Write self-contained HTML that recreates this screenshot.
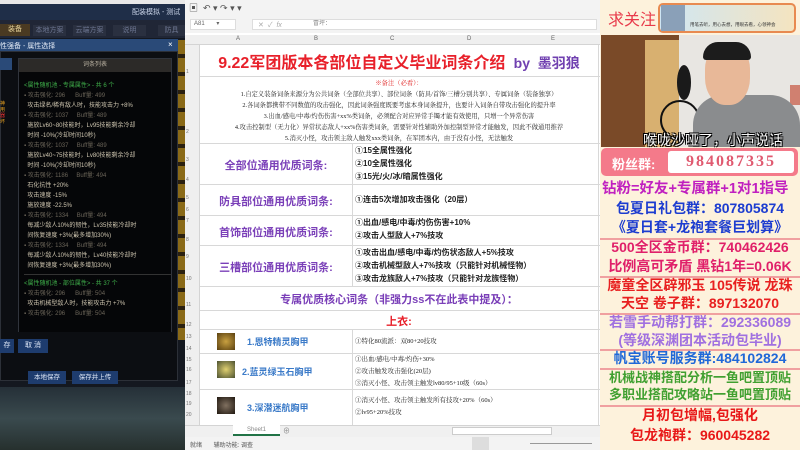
<!DOCTYPE html>
<html><head><meta charset="utf-8"><style>
*{margin:0;padding:0;box-sizing:border-box}
body{width:800px;height:450px;overflow:hidden;position:relative;background:#fff;font-family:"Liberation Sans","Noto Sans CJK SC",sans-serif}
.a{position:absolute}
.c{text-align:center;white-space:nowrap}
.n{white-space:nowrap}
</style></head><body>

<!-- LEFT GAME PANEL -->
<div class="a" style="left:0;top:0;width:185px;height:450px;background:#141820"></div>
<div class="a" style="left:0;top:0;width:185px;height:4px;background:#e8e8e8"></div>
<div class="a" style="left:0;top:4px;width:185px;height:16px;background:#1f2e48"></div>
<div class="a n" style="left:132px;top:7px;font-size:7px;color:#c9d4e8">配装模拟 - 测试</div>
<div class="a" style="left:0;top:20px;width:185px;height:18px;background:#202636"></div>
<div class="a c" style="left:0;top:24px;width:30px;height:12px;background:#4a3a22;color:#e8d49a;font-size:7px;line-height:12px">装备</div>
<div class="a c" style="left:33px;top:25px;width:33px;height:11px;background:#2a3040;color:#6c7590;font-size:7px;line-height:11px">本地方案</div>
<div class="a c" style="left:73px;top:25px;width:33px;height:11px;background:#2a3040;color:#6c7590;font-size:7px;line-height:11px">云端方案</div>
<div class="a c" style="left:113px;top:25px;width:33px;height:11px;background:#2a3040;color:#6c7590;font-size:7px;line-height:11px">说明</div>
<div class="a c" style="left:158px;top:25px;width:27px;height:11px;background:#2a3040;color:#6c7590;font-size:7px;line-height:11px">防具</div>
<div class="a" style="left:0;top:39px;width:178px;height:12px;background:#2a4a78"></div>
<div class="a n" style="left:0;top:41px;font-size:7px;color:#e0e8f4">性强备 - 属性选择</div>
<div class="a n" style="left:168px;top:40px;font-size:8px;color:#fff">×</div>
<div class="a" style="left:0;top:51px;width:178px;height:330px;background:#0c0e12;border:1px solid #2c3038"></div>
<div class="a" style="left:0;top:58px;width:12px;height:12px;background:#2a4a78"></div>
<div class="a" style="left:18px;top:58px;width:154px;height:276px;background:#050608;border:1px solid #30343c"></div>
<div class="a c" style="left:19px;top:59px;width:152px;height:13px;background:#2c2a28;color:#b8b0a0;font-size:6px;line-height:13px">词条列表</div>
<div class="a" style="left:0;top:101px;width:12px;height:40px;font-size:5px;color:#e6a020;line-height:6px">神<br>用<br><span style="color:#e03030">器</span><br>坏</div>
<div class="a" style="left:24px;top:81px;width:148px;font-size:6px;line-height:10px;color:#cfc6b0">
<div style="color:#3fae4a">&lt;属性随机池 - 专属属性&gt; - 共 6 个</div>
<div style="color:#6a6458">▪ 攻击强化: 296 &nbsp;&nbsp;&nbsp;&nbsp; Buff量: 499</div>
<div>&nbsp;&nbsp;攻击绿名/稀有敌人时，技能攻击力 +8%</div>
<div style="color:#6a6458">▪ 攻击强化: 1037 &nbsp;&nbsp;&nbsp; Buff量: 489</div>
<div>&nbsp;&nbsp;施放Lv60~80技能时，Lv95技能剩余冷却</div>
<div>&nbsp;&nbsp;时间 -10%(冷却时间10秒)</div>
<div style="color:#6a6458">▪ 攻击强化: 1037 &nbsp;&nbsp;&nbsp; Buff量: 489</div>
<div>&nbsp;&nbsp;施放Lv40~75技能时，Lv80技能剩余冷却</div>
<div>&nbsp;&nbsp;时间 -10%(冷却时间10秒)</div>
<div style="color:#6a6458">▪ 攻击强化: 1186 &nbsp;&nbsp;&nbsp; Buff量: 494</div>
<div>&nbsp;&nbsp;石化抗性 +20%</div>
<div>&nbsp;&nbsp;攻击速度 -15%</div>
<div>&nbsp;&nbsp;施放速度 -22.5%</div>
<div style="color:#6a6458">▪ 攻击强化: 1334 &nbsp;&nbsp;&nbsp; Buff量: 494</div>
<div>&nbsp;&nbsp;每减少敌人10%的韧性，Lv35技能冷却时</div>
<div>&nbsp;&nbsp;间恢复速度 +3%(最多增加30%)</div>
<div style="color:#6a6458">▪ 攻击强化: 1334 &nbsp;&nbsp;&nbsp; Buff量: 494</div>
<div>&nbsp;&nbsp;每减少敌人10%的韧性，Lv40技能冷却时</div>
<div>&nbsp;&nbsp;间恢复速度 +3%(最多增加30%)</div>
<div style="height:4px;border-bottom:1px solid #333;margin-bottom:4px"></div>
<div style="color:#3fae4a">&lt;属性随机池 - 部位属性&gt; - 共 37 个</div>
<div style="color:#6a6458">▪ 攻击强化: 296 &nbsp;&nbsp;&nbsp;&nbsp; Buff量: 504</div>
<div>&nbsp;&nbsp;攻击机械型敌人时，技能攻击力 +7%</div>
<div style="color:#6a6458">▪ 攻击强化: 296 &nbsp;&nbsp;&nbsp;&nbsp; Buff量: 504</div>
</div>
<div class="a" style="left:18px;top:332px;width:154px;height:3px;background:#0c0e12"></div>
<div class="a c" style="left:0;top:339px;width:14px;height:14px;background:#1e3c6e;color:#dfe8f8;font-size:7px;line-height:14px">存</div>
<div class="a c" style="left:18px;top:339px;width:30px;height:14px;background:#1e3c6e;color:#dfe8f8;font-size:7px;line-height:14px">取 消</div>
<div class="a c" style="left:28px;top:371px;width:38px;height:13px;background:#1e3c6e;color:#dfe8f8;font-size:6.5px;line-height:13px">本地保存</div>
<div class="a c" style="left:72px;top:371px;width:46px;height:13px;background:#1e3c6e;color:#dfe8f8;font-size:6.5px;line-height:13px">保存并上传</div>
<div class="a" style="left:0;top:387px;width:185px;height:63px;background:linear-gradient(#253038,#3a4a4e 50%,#26302e)"></div>
<div class="a" style="left:178px;top:40px;width:7px;height:300px;background:repeating-linear-gradient(#8a6a18 0 14px,#2a2010 14px 18px)"></div>

<!-- SPREADSHEET -->
<div class="a" style="left:185px;top:0;width:415px;height:450px;background:#fff"></div>
<div class="a" style="left:185px;top:0;width:415px;height:15px;background:#f3f3f3"></div>
<div class="a n" style="left:189px;top:1px;font-size:9px;color:#555">▣ &nbsp;↶ ▾ ↷ ▾ ▾</div>
<div class="a" style="left:185px;top:15px;width:415px;height:18px;background:#f3f3f3"></div>
<div class="a" style="left:190px;top:19px;width:46px;height:11px;background:#fff;border:1px solid #ddd;font-size:6px;color:#666;padding-left:3px;line-height:9px">A81 &nbsp;&nbsp;&nbsp;&nbsp;&nbsp;&nbsp;▾</div>
<div class="a" style="left:252px;top:19px;width:345px;height:11px;background:#fff;border:1px solid #ddd;font-size:6px;color:#888;padding-left:60px;line-height:9px">冒坪：</div>
<div class="a n" style="left:258px;top:20px;font-size:7px;color:#aaa">✕ &nbsp;✓ &nbsp;<i>fx</i></div>
<div class="a" style="left:185px;top:35px;width:415px;height:10px;background:#efefef;border-bottom:1px solid #d4d4d4"></div>
<div class="a n" style="left:236px;top:36px;font-size:6px;color:#666">A</div>
<div class="a n" style="left:314px;top:36px;font-size:6px;color:#666">B</div>
<div class="a n" style="left:390px;top:36px;font-size:6px;color:#666">C</div>
<div class="a n" style="left:467px;top:36px;font-size:6px;color:#666">D</div>
<div class="a n" style="left:551px;top:36px;font-size:6px;color:#666">E</div>
<div class="a" style="left:185px;top:45px;width:15px;height:380px;background:#efefef;border-right:1px solid #d4d4d4"></div>
<div class="a" style="left:186px;top:45px;width:12px;font-size:5px;color:#777;line-height:1">
<div class="a" style="top:25px">1</div><div class="a" style="top:85px">2</div><div class="a" style="top:113px">3</div><div class="a" style="top:133px">4</div><div class="a" style="top:151px">5</div><div class="a" style="top:163px">6</div><div class="a" style="top:174px">7</div><div class="a" style="top:193px">8</div><div class="a" style="top:210px">9</div><div class="a" style="top:232px">10</div><div class="a" style="top:258px">11</div><div class="a" style="top:278px">12</div><div class="a" style="top:290px">13</div><div class="a" style="top:302px">14</div><div class="a" style="top:313px">15</div><div class="a" style="top:323px">16</div><div class="a" style="top:336px">17</div><div class="a" style="top:347px">18</div><div class="a" style="top:357px">19</div><div class="a" style="top:368px">20</div>
</div>
<div class="a" style="left:200px;top:76px;width:400px;height:1px;background:#d8d8d8"></div>
<div class="a" style="left:200px;top:143px;width:400px;height:1px;background:#d8d8d8"></div>
<div class="a" style="left:200px;top:184px;width:400px;height:1px;background:#d8d8d8"></div>
<div class="a" style="left:200px;top:215px;width:400px;height:1px;background:#d8d8d8"></div>
<div class="a" style="left:200px;top:245px;width:400px;height:1px;background:#d8d8d8"></div>
<div class="a" style="left:200px;top:286px;width:400px;height:1px;background:#d8d8d8"></div>
<div class="a" style="left:200px;top:310px;width:400px;height:1px;background:#d8d8d8"></div>
<div class="a" style="left:200px;top:329px;width:400px;height:1px;background:#d8d8d8"></div>
<div class="a" style="left:200px;top:353px;width:400px;height:1px;background:#d8d8d8"></div>
<div class="a" style="left:200px;top:389px;width:400px;height:1px;background:#d8d8d8"></div>
<div class="a" style="left:352px;top:143px;width:1px;height:143px;background:#d8d8d8"></div>
<div class="a" style="left:352px;top:329px;width:1px;height:96px;background:#d8d8d8"></div>
<div class="a" style="left:598px;top:45px;width:1px;height:380px;background:#d8d8d8"></div>

<div class="a c" style="left:200px;top:49px;width:398px;font-size:16px;font-weight:bold;color:#e8202a">9.22军团版本各部位自定义毕业词条介绍 <span style="color:#7040b0;font-size:14px">&nbsp;by &nbsp;墨羽狼</span></div>
<div class="a c" style="left:200px;top:78px;width:398px;font-size:6.3px;line-height:11px;color:#222;font-family:'Liberation Serif','Noto Serif CJK SC',serif">
<div style="color:#e02020">※备注（必看）：</div>
<div>1.自定义装备词条来源分为公共词条（全部位共享）、部位词条（防具/首饰/三槽分别共享）、专属词条（装备独享）</div>
<div>2.各词条都携带不同数值的攻击强化，因此词条强度既要考虑本身词条提升，也要计入词条自带攻击强化的提升率</div>
<div>3.出血/感电/中毒/灼伤伤害+xx%类词条，必须配合对应异常手镯才能有效使用，只增一个异常伤害</div>
<div>4.攻击控制型（无力化）异常状态敌人+xx%伤害类词条，需要针对性辅助外加控制型异常才能触发，因此不做通用推荐</div>
<div>5.消灭小怪，攻击领主敌人触发xxx类词条，在军团本内，由于没有小怪，无法触发</div>
</div>
<style>.h{position:absolute;left:200px;width:152px;text-align:center;font-size:11px;font-weight:bold;color:#7a3fb8;white-space:nowrap}
.t{position:absolute;left:355px;font-size:8px;font-weight:bold;color:#222;line-height:13px;white-space:nowrap}
.s{position:absolute;left:355px;font-size:6.5px;color:#222;line-height:12px;white-space:nowrap;font-family:'Liberation Serif','Noto Serif CJK SC',serif}</style>
<div class="h" style="top:157px">全部位通用优质词条:</div>
<div class="t" style="top:144px">①15全属性强化<br>②10全属性强化<br>③15光/火/冰/暗属性强化</div>
<div class="h" style="top:193px">防具部位通用优质词条:</div>
<div class="t" style="top:193px">①连击5次增加攻击强化（20层）</div>
<div class="h" style="top:224px">首饰部位通用优质词条:</div>
<div class="t" style="top:216px">①出血/感电/中毒/灼伤伤害+10%<br>②攻击人型敌人+7%技攻</div>
<div class="h" style="top:259px">三槽部位通用优质词条:</div>
<div class="t" style="top:246px">①攻击出血/感电/中毒/灼伤状态敌人+5%技攻<br>②攻击机械型敌人+7%技攻（只能针对机械怪物）<br>③攻击龙族敌人+7%技攻（只能针对龙族怪物）</div>
<div class="h" style="top:291px;width:398px">专属优质核心词条（非强力ss不在此表中提及）：</div>
<div class="h" style="top:313px;width:398px;color:#e8202a">上衣:</div>
<div class="a" style="left:217px;top:333px;width:18px;height:17px;background:radial-gradient(#c8a040,#5a4010)"></div>
<div class="a" style="left:217px;top:361px;width:18px;height:17px;background:radial-gradient(#e0d070,#4a5030)"></div>
<div class="a" style="left:217px;top:397px;width:18px;height:17px;background:radial-gradient(#807060,#201810)"></div>
<div class="a n" style="left:247px;top:335px;font-size:9px;font-weight:bold;color:#3a7ac8">1.恩特精灵胸甲</div>
<div class="a n" style="left:242px;top:365px;font-size:9px;font-weight:bold;color:#3a7ac8">2.蓝灵绿玉石胸甲</div>
<div class="a n" style="left:247px;top:401px;font-size:9px;font-weight:bold;color:#3a7ac8">3.深潜迷航胸甲</div>
<div class="s" style="top:336px">①特化80流派：双80+20技攻</div>
<div class="s" style="top:354px">①出血/感电/中毒/灼伤+30%<br>②攻击触发攻击强化(20层)<br>③消灭小怪、攻击领主触发lv80/95+10级（60s）</div>
<div class="s" style="top:395px">①消灭小怪、攻击领主触发所有技攻+20%（60s）<br>②lv95+20%技攻</div>
<div class="a" style="left:185px;top:425px;width:415px;height:12px;background:#f0f0f0;border-top:1px solid #d4d4d4"></div>
<div class="a c" style="left:233px;top:425px;width:47px;height:11px;background:#fff;font-size:6px;color:#888;line-height:11px;border-bottom:2px solid #217346">Sheet1</div>
<div class="a n" style="left:283px;top:426px;font-size:7px;color:#888">⊕</div>
<div class="a" style="left:452px;top:427px;width:100px;height:8px;background:#fff;border:1px solid #ccc"></div>
<div class="a" style="left:185px;top:437px;width:415px;height:13px;background:#f3f3f3"></div>
<div class="a n" style="left:190px;top:440px;font-size:6px;color:#555">就绪 &nbsp;&nbsp;&nbsp;&nbsp;&nbsp;&nbsp;辅助功能: 调查</div>
<div class="a" style="left:472px;top:437px;width:17px;height:13px;background:#ddd"></div>
<div class="a" style="left:530px;top:443px;width:62px;height:1px;background:#999"></div>

<!-- RIGHT STREAM PANEL -->
<div class="a" style="left:600px;top:0;width:200px;height:450px;background:#fdf2dc"></div>
<div class="a n" style="left:608px;top:6px;font-size:16px;color:#e83a4a">求关注</div>
<div class="a" style="left:658px;top:3px;width:138px;height:30px;background:linear-gradient(90deg,#cfe6f4,#f4e4c0);border:2px solid #e88a50;border-radius:5px"></div>
<div class="a" style="left:661px;top:5px;width:24px;height:26px;background:#8aa0b8"></div>
<div class="a n" style="left:690px;top:22px;font-size:4.5px;color:#333">用笔去听，用心去想，用眼去看，心领神会</div>
<div class="a" style="left:601px;top:35px;width:199px;height:112px;background:#e8e6e2"></div>
<div class="a" style="left:601px;top:35px;width:78px;height:112px;background:#7a4a28"></div>
<div class="a" style="left:645px;top:40px;width:34px;height:107px;background:#d8b070"></div>
<div class="a" style="left:660px;top:100px;width:40px;height:40px;border:2px solid #111;border-radius:50%"></div>
<div class="a" style="left:677px;top:65px;width:14px;height:35px;background:#1a1a1a;border-radius:50%"></div>
<div class="a" style="left:790px;top:85px;width:10px;height:20px;background:#d08070"></div>
<div class="a" style="left:693px;top:95px;width:107px;height:52px;background:#8a8c8e;border-radius:30px 30px 0 0"></div>
<div class="a" style="left:705px;top:45px;width:45px;height:60px;background:#e8b898;border-radius:40% 40% 45% 45%"></div>
<div class="a" style="left:703px;top:42px;width:48px;height:18px;background:#1c1c1c;border-radius:20px 20px 4px 4px"></div>
<div class="a n" style="left:643px;top:130px;font-size:14px;color:#fff;text-shadow:-1px -1px 0 #000,1px 1px 0 #000,1px -1px 0 #000,-1px 1px 0 #000">喉咙沙哑了，小声说话</div>
<div class="a" style="left:601px;top:148px;width:197px;height:28px;background:#f47a8a;border-radius:5px"></div>
<div class="a n" style="left:612px;top:154px;font-size:13px;font-weight:bold;color:#fff">粉丝群:</div>
<div class="a c" style="left:668px;top:151px;width:126px;height:22px;background:#fff;border-radius:3px;font-size:16px;font-weight:bold;color:#e05a70;line-height:22px;font-family:'Liberation Serif',serif;letter-spacing:2px">984087335</div>
<div class="a n" style="left:602px;top:177px;font-size:14.5px;font-weight:bold;color:#c020c0">钻粉=好友+专属群+1对1指导</div>
<style>.r{position:absolute;left:600px;width:200px;text-align:center;white-space:nowrap;font-weight:bold;font-size:14px;line-height:18px}
.sep{position:absolute;left:600px;width:200px;height:2px;background:#f0a0a0}</style>
<div class="r" style="top:199px;color:#1c3cd0">包夏日礼包群：807805874</div>
<div class="r" style="top:218px;color:#1c3cd0">《夏日套+龙袍套餐巨划算》</div>
<div class="sep" style="top:238px"></div>
<div class="r" style="top:238px;color:#e0206a">500全区金币群：740462426</div>
<div class="r" style="top:257px;color:#e0206a">比例高可矛盾 黑钻1年=0.06K</div>
<div class="sep" style="top:276px"></div>
<div class="r" style="top:276px;color:#e82020">魔童全区辟邪玉 105传说 龙珠</div>
<div class="r" style="top:294px;color:#e82020">天空 卷子群：897132070</div>
<div class="sep" style="top:313px"></div>
<div class="r" style="top:313px;color:#a070e0">若雪手动帮打群：292336089</div>
<div class="r" style="top:331px;color:#a070e0">(等级深渊团本活动包毕业)</div>
<div class="sep" style="top:349px"></div>
<div class="r" style="top:349px;color:#2068d8">帆宝账号服务群:484102824</div>
<div class="sep" style="top:368px"></div>
<div class="r" style="top:369px;color:#40a030;font-size:13px">机械战神搭配分析一鱼吧置顶贴</div>
<div class="r" style="top:386px;color:#40a030;font-size:13px">多职业搭配攻略站一鱼吧置顶贴</div>
<div class="sep" style="top:405px"></div>
<div class="r" style="top:406px;color:#e81818">月初包增幅,包强化</div>
<div class="r" style="top:426px;color:#e81818">包龙袍群：960045282</div>
</body></html>
